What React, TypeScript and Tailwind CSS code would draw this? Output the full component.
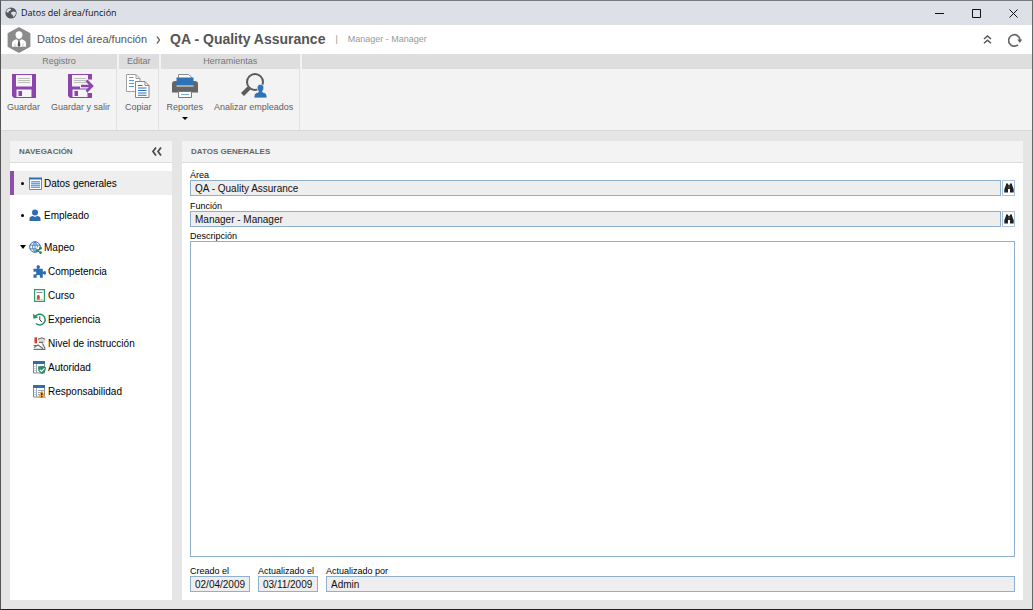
import type { ReactNode } from "react";

type IconProps = { children: ReactNode; className: string; viewBox: string };

function Icon({ children, className, viewBox }: IconProps) {
  return (
    <svg viewBox={viewBox} className={`shrink-0 ${className}`} fill="none" aria-hidden="true">
      {children}
    </svg>
  );
}

function GlobeIcon() {
  return (
    <Icon viewBox="0 0 12 12" className="size-3">
      <circle cx="6" cy="6" r="5.6" fill="#53575c" />
      <path d="M1.600 3.200 4 1.600l2.200.500-.700 1.500-1.700.600-.500 1.500-1.800-.400ZM6.300 5.200l2-.800 2.400.500.200 2-1.800 2.600-1.200.300-.300-2-1.600-.800Z" fill="#dde0e6" />
    </Icon>
  );
}

function AppLogo() {
  return (
    <Icon viewBox="0 0 24 26" className="h-[26px] w-6">
      <path d="M12 0 23.400 6.200v13.600L12 26 .600 19.800V6.200Z" fill="#8b8b8b" />
      <path d="M12 4.200c2.200 0 3.500 1.500 3.500 3.600S14 12 12 12s-3.500-2.100-3.500-4.200S9.800 4.200 12 4.200ZM5 19.800v-3.600c0-2.200 2-3.200 4.700-3.900L12 14.800l2.300-2.500c2.700.700 4.700 1.700 4.700 3.900v3.600Z" fill="#fff" />
      <path d="m11.200 14.300h1.600l.600 4.200-1.400 1.600-1.400-1.600Z" fill="#555" />
      <path d="M8 16.500v3.300M16 16.500v3.300" stroke="#aaa" strokeWidth=".7" />
    </Icon>
  );
}

function SaveShape() {
  return (
    <>
      <path d="M0 0h24v24H2l-2-2Z" fill="#8e44ad" />
      <path d="M4 1h16v11.500H4ZM4.500 15.500h15V23h-15Z" fill="#f5f5f5" />
      <path d="M6 4.500h12M6 6.500h12M6 8.500h12" stroke="#bdbdbd" />
      <path d="M6.500 17H10v5H6.500Z" fill="#8e44ad" />
    </>
  );
}

function SaveIcon() {
  return (
    <Icon viewBox="0 0 24 24" className="size-6">
      <SaveShape />
    </Icon>
  );
}

function SaveExitIcon() {
  return (
    <Icon viewBox="0 0 26 24" className="h-6 w-[26px]">
      <SaveShape />
      <path d="M20 5.500h6v13.500h-6Z" fill="#f3f3f3" />
      <path d="M12 12h9" stroke="#f5f5f5" strokeWidth="5" />
      <path d="M13 12h11M18.500 6.500 24 12l-5.500 5.500" stroke="#8e44ad" strokeWidth="2.600" />
    </Icon>
  );
}

function CopyIcon() {
  return (
    <Icon viewBox="0 0 24 24" className="size-6">
      <path d="M.5.500h9.500l4 4V17.500H.5Z" fill="#fff" stroke="#a0a0a0" />
      <path d="M10 .5v4h4" stroke="#a0a0a0" />
      <path d="M3 3.500h4.500M3 6.500h5M3 9.500h5M3 12.500h5" stroke="#5b9bd5" />
      <path d="M9.500 7.500H19l4 4v12H9.500Z" fill="#fff" stroke="#858585" />
      <path d="M19 7.500v4h4" stroke="#858585" />
      <path d="M12 11.500h4.500M12 14h8.500M12 16.500h8.500M12 19h8.500M12 21.300h8.500" stroke="#2f72b8" />
    </Icon>
  );
}

function PrinterIcon() {
  return (
    <Icon viewBox="0 0 26 24" className="h-6 w-[26px]">
      <path d="M6.500.500h10l3 2.500v5h-13Z" fill="#fff" stroke="#8b8b8b" />
      <path d="M0 10c0-2 1-3 3-3h20c2 0 3 1 3 3v8.500H0Z" fill="#666" />
      <path d="M4.500 3.500h17V11.500h-17Z" fill="#2f72b8" />
      <path d="M4.500 12h17" stroke="#eee" />
      <path d="M6.500 17.500h13v6h-13Z" fill="#fff" stroke="#777" />
      <path d="M9 20.500h8" stroke="#7aa7d6" />
    </Icon>
  );
}

function AnalyzeIcon() {
  return (
    <Icon viewBox="0 0 26 25" className="h-[25px] w-[26px]">
      <circle cx="14" cy="9" r="8" stroke="#5b5b5b" strokeWidth="2" />
      <path d="m8 15-6.500 6.500" stroke="#5b5b5b" strokeWidth="4.200" />
      <path d="M19.500 11.300c2 0 3.300 1.400 3.300 3.300 0 1.700-.600 2.800-1.300 3.600l.300 1c2.700.600 4.200 1.300 4.200 5.800H13c0-4.500 1.500-5.200 4.200-5.800l.300-1c-.700-.800-1.300-1.900-1.300-3.600 0-1.900 1.300-3.300 3.300-3.300Z" fill="#2f72b8" stroke="#f3f3f3" strokeWidth=".8" />
    </Icon>
  );
}

function FormIcon() {
  return (
    <Icon viewBox="0 0 13 13" className="size-[13px]">
      <path d="M.5 1.500h12v11H.5Z" fill="#fff" stroke="#7b8794" />
      <path d="M0 .5h13v2H0Z" fill="#2f6db0" />
      <path d="M2 4h9v7H2Z" fill="#b5d0ec" />
      <path d="M2 4.500h9M2 6.500h9M2 8.500h9M2 10.500h9" stroke="#6fa3da" />
    </Icon>
  );
}

function PersonIcon() {
  return (
    <Icon viewBox="0 0 12 13" className="h-[13px] w-3">
      <circle cx="6" cy="3.500" r="3" fill="#2f6db0" />
      <path d="M.5 12V9.500C.500 8 2 7.200 4 7l2 1 2-1c2 .200 3.500 1 3.500 2.500V12Z" fill="#2f6db0" />
    </Icon>
  );
}

function MapIcon() {
  return (
    <Icon viewBox="0 0 13 13" className="size-[13px]">
      <circle cx="6" cy="6" r="5.300" fill="#fff" stroke="#2f6db0" />
      <path d="M.700 4.200h10.600M.700 7.800h7M6 .700C2.800 4 2.800 8 6 11.300M6 .700C8 2.800 8.600 4.500 8.300 6.500M6 .700v10.600" stroke="#2f6db0" strokeWidth=".8" />
      <path d="M11.500 7.200 8 9.700l3.500 2" stroke="#1f8a4c" />
      <circle cx="11.500" cy="7.200" r="1.400" fill="#1f8a4c" />
      <circle cx="8" cy="9.700" r="1.400" fill="#1f8a4c" />
      <circle cx="11.500" cy="11.600" r="1.400" fill="#1f8a4c" />
    </Icon>
  );
}

function PuzzleIcon() {
  return (
    <Icon viewBox="0 0 13 13" className="size-[13px]">
      <path d="M.500 3.800H4C4.400 3.200 3.500 2.600 3.500 1.800 3.500.900 4.200.300 5.200.300s1.800.600 1.800 1.500c0 .800-.900 1.400-.500 2h3.300v2.700c.700.600 1-.400 1.800-.400.800 0 1.400.800 1.400 1.800s-.600 1.800-1.400 1.800c-.800 0-1.100-1-1.800-.400v3.500H7c-.500-.600.100-1 .100-1.700 0-.700-.800-1.200-1.800-1.200s-1.800.500-1.800 1.200.600 1.100.100 1.700H.500V9.500c.600-.600 1 .100 1.700 0 .700-.100 1.100-.700 1.100-1.500s-.500-1.400-1.200-1.400-1 .600-1.600 0Z" fill="#2f6db0" />
    </Icon>
  );
}

function CourseIcon() {
  return (
    <Icon viewBox="0 0 11 13" className="ml-px h-[13px] w-[11px]">
      <path d="M.600.600h9.800v11.800H.600Z" fill="#fff" stroke="#2a9d6a" strokeWidth="1.200" />
      <path d="M2.500 3.500h6" stroke="#8a8a8a" />
      <circle cx="4.300" cy="7.500" r="1.400" fill="#d9402f" />
      <path d="M3.200 8h2.200v2.800l-1.100-.600-1.100.600ZM6.500 10.500h2" stroke="#d9402f" strokeWidth=".5" fill="#d9402f" />
    </Icon>
  );
}

function HistoryIcon() {
  return (
    <Icon viewBox="0 0 13 13" className="size-[13px]">
      <path d="M2.200 3.700A5.400 5.400 0 1 1 3 10.500" stroke="#1f9463" strokeWidth="1.500" />
      <path d="M0 .800.500 5.800l4.700-1.200Z" fill="#1f9463" />
      <path d="M6.800 3.500v3.300l2.200 2.300" stroke="#333" />
    </Icon>
  );
}

function InstructionIcon() {
  return (
    <Icon viewBox="0 0 13 13" className="size-[13px]">
      <path d="M1.500.300H4v6H1.500Z" fill="#d63a2a" />
      <path d="M5 2.300 8.700.800l3.500 1.500v3L9 7 6 5.300Z" fill="#ddd" />
      <path d="M5 2.300 8.700.800l3.500 1.500M6 5.300h4M.500 8.500h4M1 10.500l4-2.500 5 3.500M9.500 6.500l2.500 5M.5 12.300h12" stroke="#707070" strokeWidth="1.200" />
    </Icon>
  );
}

function TableShape() {
  return (
    <>
      <path d="M.5 1h11v11H.5Z" fill="#fff" stroke="#8a8a8a" />
      <path d="M0 0h12v3H0Z" fill="#2f6db0" />
      <path d="M3.500 3v9M5 5.500h6M5 7.500h5M5 9.500h4M1.500 5.500h1M1.500 7.500h1M1.500 9.500h1" stroke="#9aa8b6" />
    </>
  );
}

function AuthorityIcon() {
  return (
    <Icon viewBox="0 0 13 13" className="size-[13px]">
      <TableShape />
      <path d="M9 4.800 13 6.200c0 3.500-1.300 5.600-4 6.800-2.700-1.200-4-3.300-4-6.800Z" fill="#23935c" />
      <path d="m6.800 8.700 1.700 1.600 3-3" stroke="#fff" strokeWidth="1.200" />
    </Icon>
  );
}

function ResponsibilityIcon() {
  return (
    <Icon viewBox="0 0 13 13" className="size-[13px]">
      <TableShape />
      <path d="m8.800 5 4.200 8H4.600Z" fill="#f2a93b" />
      <path d="M8.800 7.800v2.500M8.800 11v1.200" stroke="#222" strokeWidth="1.300" />
    </Icon>
  );
}

function BinocularsIcon() {
  return (
    <Icon viewBox="0 0 10 10" className="size-[10px]">
      <path d="M2 .5h2v1.300h2V.5h2v1.300l1.700 4.500V9.500H6V6H4v3.500H.3V6.300L2 1.800Z" fill="#222" />
      <path d="M4.500 2.300v3M5.500 2.300v3" stroke="#777" strokeWidth=".4" />
    </Icon>
  );
}

function ToolButton({ icon, label, menu }: { icon: ReactNode; label: string; menu?: boolean }) {
  return (
    <button className="flex flex-col items-center whitespace-nowrap text-[9px] leading-[10px] text-[#5f5f5f]">
      <span className="flex h-[25px] items-center">{icon}</span>
      <span className="mt-1">{label}</span>
      {menu && <span className="mt-[5px] border-x-[3px] border-t-[3px] border-x-transparent border-t-black" />}
    </button>
  );
}

function ToolGroup({ title, children }: { title: string; children: ReactNode }) {
  return (
    <div className="mr-0.5 flex flex-col">
      <div className="h-[15px] bg-[#dedede] text-center text-[9px] leading-[15px] text-[#757575]">{title}</div>
      <div className="flex flex-1 items-start gap-[11px] border-r border-[#e0e0e0] px-1.5 pt-1">{children}</div>
    </div>
  );
}

function PanelHeader({ title, children }: { title: string; children?: ReactNode }) {
  return (
    <div className="flex h-[22px] shrink-0 items-center justify-between border-b border-[#dcdcdc] bg-[#f3f3f3] px-[9px]">
      <h2 className="text-[8px] font-bold text-[#666]">{title}</h2>
      {children}
    </div>
  );
}

const NAV_ITEMS = [
  { label: "Datos generales", icon: <FormIcon />, active: true },
  { label: "Empleado", icon: <PersonIcon />, active: false },
];

const MAP_ITEMS = [
  { label: "Competencia", icon: <PuzzleIcon /> },
  { label: "Curso", icon: <CourseIcon /> },
  { label: "Experiencia", icon: <HistoryIcon /> },
  { label: "Nivel de instrucción", icon: <InstructionIcon /> },
  { label: "Autoridad", icon: <AuthorityIcon /> },
  { label: "Responsabilidad", icon: <ResponsibilityIcon /> },
];

function Navigation() {
  return (
    <nav className="flex w-[162px] shrink-0 flex-col bg-white">
      <PanelHeader title="NAVEGACIÓN">
        <button aria-label="Contraer navegación" className="mr-px">
          <Icon viewBox="0 0 11 9" className="h-[9px] w-[11px]">
            <path d="M5 .5 2 4.500l3 4M10 .5 7 4.500l3 4" stroke="#4d4d4d" strokeWidth="1.800" />
          </Icon>
        </button>
      </PanelHeader>
      <ul className="flex flex-col gap-2 pt-2 text-[10px]">
        {NAV_ITEMS.map((item) => (
          <li key={item.label}>
            <a
              href="#"
              className={`flex h-6 items-center border-l-4 ${item.active ? "border-[#8e4fa8] bg-[#eee]" : "border-transparent"}`}
            >
              <span className="ml-[7px] mr-[5px] size-[3px] rounded-full bg-black" />
              <span className="flex w-[15px]">{item.icon}</span>
              {item.label}
            </a>
          </li>
        ))}
        <li>
          <a href="#" className="flex h-6 items-center pl-[10px]">
            <span className="mr-[3px] border-x-[3px] border-t-4 border-x-transparent border-t-black" />
            <span className="flex w-[15px]">
              <MapIcon />
            </span>
            Mapeo
          </a>
          <ul>
            {MAP_ITEMS.map((item) => (
              <li key={item.label}>
                <a href="#" className="flex h-6 items-center pl-[23px]">
                  <span className="flex w-[15px]">{item.icon}</span>
                  {item.label}
                </a>
              </li>
            ))}
          </ul>
        </li>
      </ul>
    </nav>
  );
}

type FieldProps = { id: string; label: string; value: string; search?: boolean; className?: string };

function Field({ id, label, value, search, className = "" }: FieldProps) {
  return (
    <div className={`flex flex-col ${className}`}>
      <label htmlFor={id} className="text-[9px] leading-[10px]">
        {label}
      </label>
      <div className="flex gap-px">
        <input
          id={id}
          defaultValue={value}
          readOnly
          className="h-4 w-full min-w-0 flex-1 border border-[#8fb0cd] bg-[#eee] pl-1 text-[10px] text-[#111] outline-none"
        />
        {search && (
          <button
            aria-label={`Buscar ${label}`}
            className="flex h-4 w-[13px] items-center justify-center border border-[#a9c3dc] bg-white"
          >
            <BinocularsIcon />
          </button>
        )}
      </div>
    </div>
  );
}

function GeneralData() {
  return (
    <main className="flex min-w-0 flex-1 flex-col bg-white">
      <PanelHeader title="DATOS GENERALES" />
      <form className="flex flex-1 flex-col px-2 pb-2 pt-[7px]">
        <Field id="area" label="Área" value="QA - Quality Assurance" search />
        <Field id="funcion" label="Función" value="Manager - Manager" search className="mt-[5px]" />
        <label htmlFor="descripcion" className="mt-1 text-[9px] leading-[10px]">
          Descripción
        </label>
        <textarea
          id="descripcion"
          className="min-h-20 flex-1 resize-none border border-[#8fb0cd] bg-white p-1 text-[10px] outline-none"
        />
        <div className="mt-[9px] flex gap-2">
          <Field id="creado" label="Creado el" value="02/04/2009" className="w-[60px]" />
          <Field id="actualizado" label="Actualizado el" value="03/11/2009" className="w-[60px]" />
          <Field id="autor" label="Actualizado por" value="Admin" className="flex-1" />
        </div>
      </form>
    </main>
  );
}

function TitleBar() {
  return (
    <div className="flex h-6 shrink-0 items-center bg-[#dde0e6] pl-1">
      <GlobeIcon />
      <span className="ml-1 flex-1 font-['Open_Sans',sans-serif] text-[9px] text-[#111]">Datos del área/función</span>
      <div className="flex gap-7 pr-[14px]">
        <button aria-label="Minimizar">
          <Icon viewBox="0 0 9 9" className="size-[9px]">
            <path d="M0 4.500h9" stroke="#111" />
          </Icon>
        </button>
        <button aria-label="Maximizar">
          <Icon viewBox="0 0 9 9" className="size-[9px]">
            <path d="M.5.500h8v8h-8Z" stroke="#111" />
          </Icon>
        </button>
        <button aria-label="Cerrar">
          <Icon viewBox="0 0 9 9" className="size-[9px]">
            <path d="m.5.500 8 8M8.500.500l-8 8" stroke="#111" />
          </Icon>
        </button>
      </div>
    </div>
  );
}

function Header() {
  return (
    <header className="flex h-[29px] shrink-0 items-center bg-white pl-1.5 pr-[10px]">
      <AppLogo />
      <span className="ml-1.5 text-[11px] text-[#555]">Datos del área/función</span>
      <Icon viewBox="0 0 5 8" className="ml-[9px] mr-[9px] h-2 w-[5px]">
        <path d="m1 .5 2.500 3.500L1 7.500" stroke="#666" strokeWidth="1.300" />
      </Icon>
      <h1 className="text-[14px] font-bold text-[#555]">QA - Quality Assurance</h1>
      <span className="mx-[10px] text-[9px] text-[#999]">|</span>
      <span className="flex-1 text-[9px] text-[#999]">Manager - Manager</span>
      <button aria-label="Contraer barra">
        <Icon viewBox="0 0 9 9" className="size-[9px]">
          <path d="m1 4 3.500-3L8 4M1 8.300l3.500-3 3.500 3" stroke="#555" strokeWidth="1.500" />
        </Icon>
      </button>
      <button aria-label="Actualizar" className="ml-4">
        <Icon viewBox="0 0 14 14" className="size-[14px]">
          <path d="M10 11.800A5.700 5.700 0 1 1 12 7" stroke="#666" strokeWidth="1.700" />
          <path d="M9.300 6.500H14.300l-2.500 3.500Z" fill="#666" />
        </Icon>
      </button>
    </header>
  );
}

export default function App() {
  return (
    <div className="flex h-screen min-h-[420px] flex-col border border-b-[#222] border-l-[#555] border-r-[#666] border-t-[#7b7c80] bg-[#e5e5e5] font-['Liberation_Sans',Arial,sans-serif] text-black">
      <TitleBar />
      <Header />
      <div className="flex h-[77px] shrink-0 border-b border-[#d8d8d8] bg-[#f3f3f3]">
        <ToolGroup title="Registro">
          <ToolButton icon={<SaveIcon />} label="Guardar" />
          <ToolButton icon={<SaveExitIcon />} label="Guardar y salir" />
        </ToolGroup>
        <ToolGroup title="Editar">
          <ToolButton icon={<CopyIcon />} label="Copiar" />
        </ToolGroup>
        <ToolGroup title="Herramientas">
          <ToolButton icon={<PrinterIcon />} label="Reportes" menu />
          <ToolButton icon={<AnalyzeIcon />} label="Analizar empleados" />
        </ToolGroup>
        <div className="h-[15px] flex-1 bg-[#dedede]" />
      </div>
      <div className="flex min-h-0 flex-1 gap-[10px] px-[9px] pb-[9px] pt-[10px]">
        <Navigation />
        <GeneralData />
      </div>
    </div>
  );
}
